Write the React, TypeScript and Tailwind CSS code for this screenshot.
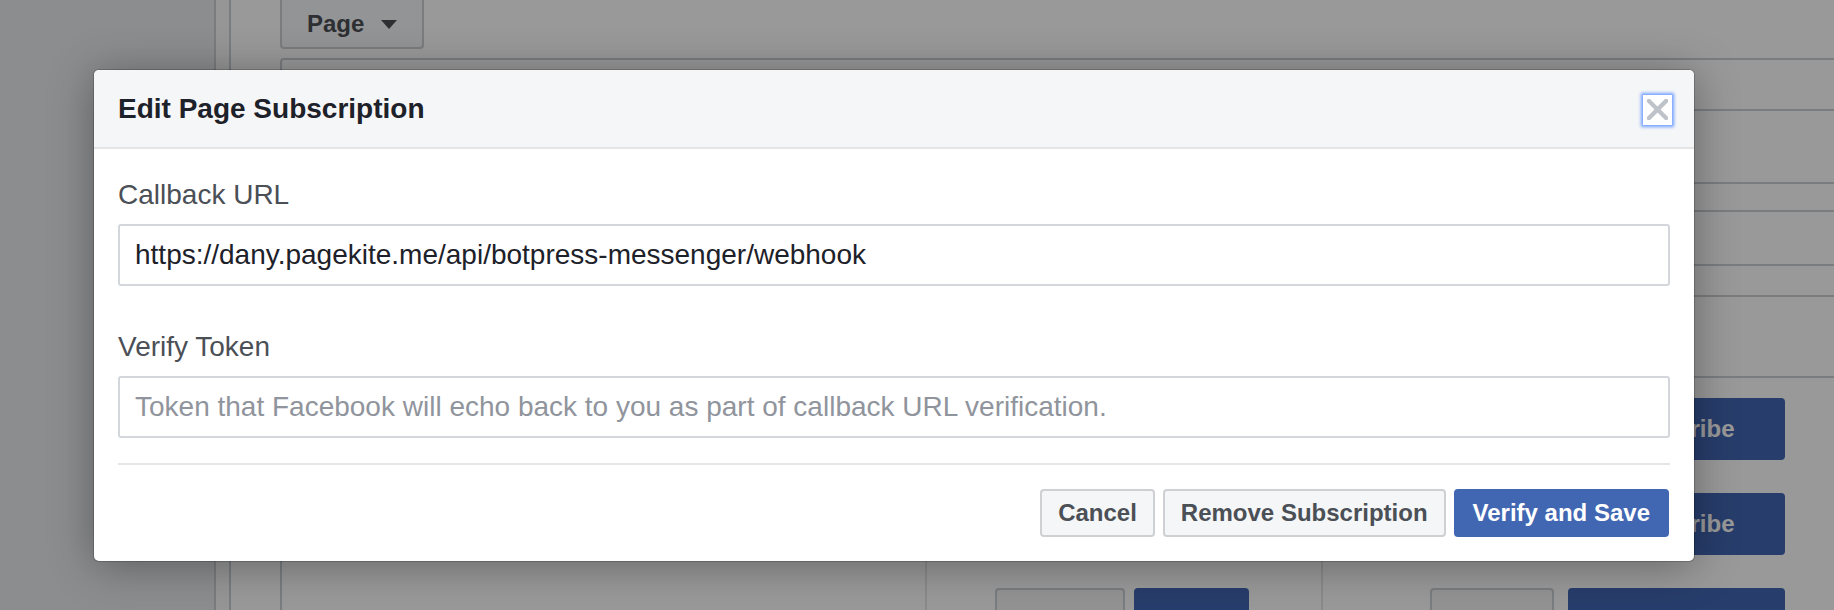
import { useState } from "react";

const font = "font-['Liberation_Sans','Helvetica',Arial,sans-serif]";

function Backdrop() {
  return (
    <div className="flex h-full w-full bg-white">
      {/* left nav */}
      <div className="w-[216px] shrink-0 bg-[#e9ebee] border-r-2 border-[#ccd0d5]" />
      <div className="w-[15px] shrink-0 bg-[#fafafa] border-r-2 border-[#ccd0d5]" />

      <div className="flex-1 pl-[49px]">
        <div className="flex h-[49px] w-[144px] items-center gap-[17px] rounded-b-[4px] border-2 border-t-0 border-[#ccd0d5] bg-[#f6f7f9] pl-[25px]">
          <span className="text-[24px] font-bold text-[#4b4f56]">Page</span>
          <svg width="16" height="9" viewBox="0 0 16 9" className="mt-[2px]">
            <path d="M0 0h16L8 9z" fill="#4b4f56" />
          </svg>
        </div>

        <div className="mt-[9px] -mr-[10px] rounded-t-[4px] border-2 border-b-0 border-[#ccd0d5]">
          <div className="h-[51px] border-b-2 border-[#ccd0d5]" />
          <div className="h-[73px] border-b-2 border-[#ccd0d5]" />
          <div className="h-[28px] border-b-2 border-[#ccd0d5]" />
          <div className="h-[54px] border-b-2 border-[#ccd0d5]" />
          <div className="h-[31px] border-b-2 border-[#ccd0d5]" />
          <div className="h-[81px] border-b-2 border-[#ccd0d5]" />
          <div className="flex">
            <div className="w-[643px] shrink-0" />
            <div className="w-[396px] shrink-0 border-l-2 border-[#e4e6e9] pt-[20px]">
              <div className="flex flex-col pl-[68px]">
                {[0, 1, 2].map((i) => (
                  <div key={i} className="flex gap-[9px] mb-[33px]">
                    <div className="h-[62px] w-[130px] rounded-[4px] border-2 border-[#ccd0d5] bg-[#f5f6f7]" />
                    <div className="h-[62px] w-[115px] rounded-[4px] bg-[#4267b2]" />
                  </div>
                ))}
              </div>
            </div>
            <div className="flex-1 border-l-2 border-[#e4e6e9] pt-[20px]">
              <div className="flex flex-col pl-[107px]">
                {["Subscribe", "Subscribe", ""].map((t, i) => (
                  <div key={i} className="flex gap-[14px] mb-[33px]">
                    <div className="h-[62px] w-[124px] rounded-[4px] border-2 border-[#ccd0d5] bg-[#f5f6f7]" />
                    <div className="h-[62px] w-[217px] rounded-[4px] bg-[#4267b2] flex items-center justify-center text-[24px] font-bold text-white">
                      {t}
                    </div>
                  </div>
                ))}
              </div>
            </div>
          </div>
        </div>
      </div>
    </div>
  );
}

function Field({ label, value, placeholder }: { label: string; value?: string; placeholder?: string }) {
  const [v, setV] = useState(value ?? "");
  return (
    <div>
      <label className="block text-[28px] leading-[32px] text-[#4b4f56]">{label}</label>
      <input
        value={v}
        onChange={(e) => setV(e.target.value)}
        placeholder={placeholder}
        className="mt-[13px] block h-[62px] w-full rounded-[3px] border-2 border-[#d3d6db] bg-white px-[15px] text-[28px] text-[#1d2129] outline-none placeholder:text-[#90949c]"
      />
    </div>
  );
}

export default function App() {
  return (
    <div className={`relative h-[610px] w-[1834px] overflow-hidden ${font}`}>
      <Backdrop />
      <div className="absolute inset-0 bg-black/40" />

      {/* dialog */}
      <div className="absolute left-[94px] top-[70px] w-[1600px] overflow-hidden rounded-[5px] bg-white shadow-[0_0_0_1px_rgba(0,0,0,0.18),0_4px_44px_rgba(0,0,0,0.35)]">
        <div className="flex h-[79px] items-center justify-between border-b-2 border-[#e5e5e5] bg-[#f5f6f7] pl-[24px] pr-[22px]">
          <h2 className="text-[28px] font-bold text-[#1d2129]">Edit Page Subscription</h2>
          <button className="mt-[2px] flex h-[30px] w-[29px] items-center justify-center bg-white shadow-[0_0_3px_2px_#74a1ff]">
            <svg width="21" height="21" viewBox="0 0 22 22">
              <path d="M2 2L20 20M20 2L2 20" stroke="#bec2c9" strokeWidth="4.5" strokeLinecap="square" />
            </svg>
          </button>
        </div>

        <div className="px-[24px] pt-[30px] pb-[24px]">
          <Field label="Callback URL" value="https://dany.pagekite.me/api/botpress-messenger/webhook" />
          <div className="mt-[45px]">
            <Field
              label="Verify Token"
              placeholder="Token that Facebook will echo back to you as part of callback URL verification."
            />
          </div>

          <div className="mt-[25px] h-[2px] bg-[#e5e6e9]" />

          <div className="mt-[24px] flex justify-end gap-[8px] pr-[1px]">
            <button className="h-[48px] rounded-[4px] border-2 border-[#ced0d4] bg-[#f5f6f7] px-[16px] text-[24px] font-bold text-[#4b4f56]">
              Cancel
            </button>
            <button className="h-[48px] rounded-[4px] border-2 border-[#ced0d4] bg-[#f5f6f7] px-[16px] text-[24px] font-bold text-[#4b4f56]">
              Remove Subscription
            </button>
            <button className="h-[48px] rounded-[4px] border-2 border-[#4267b2] bg-[#4267b2] px-[17px] text-[24px] font-bold text-white">
              Verify and Save
            </button>
          </div>
        </div>
      </div>
    </div>
  );
}
